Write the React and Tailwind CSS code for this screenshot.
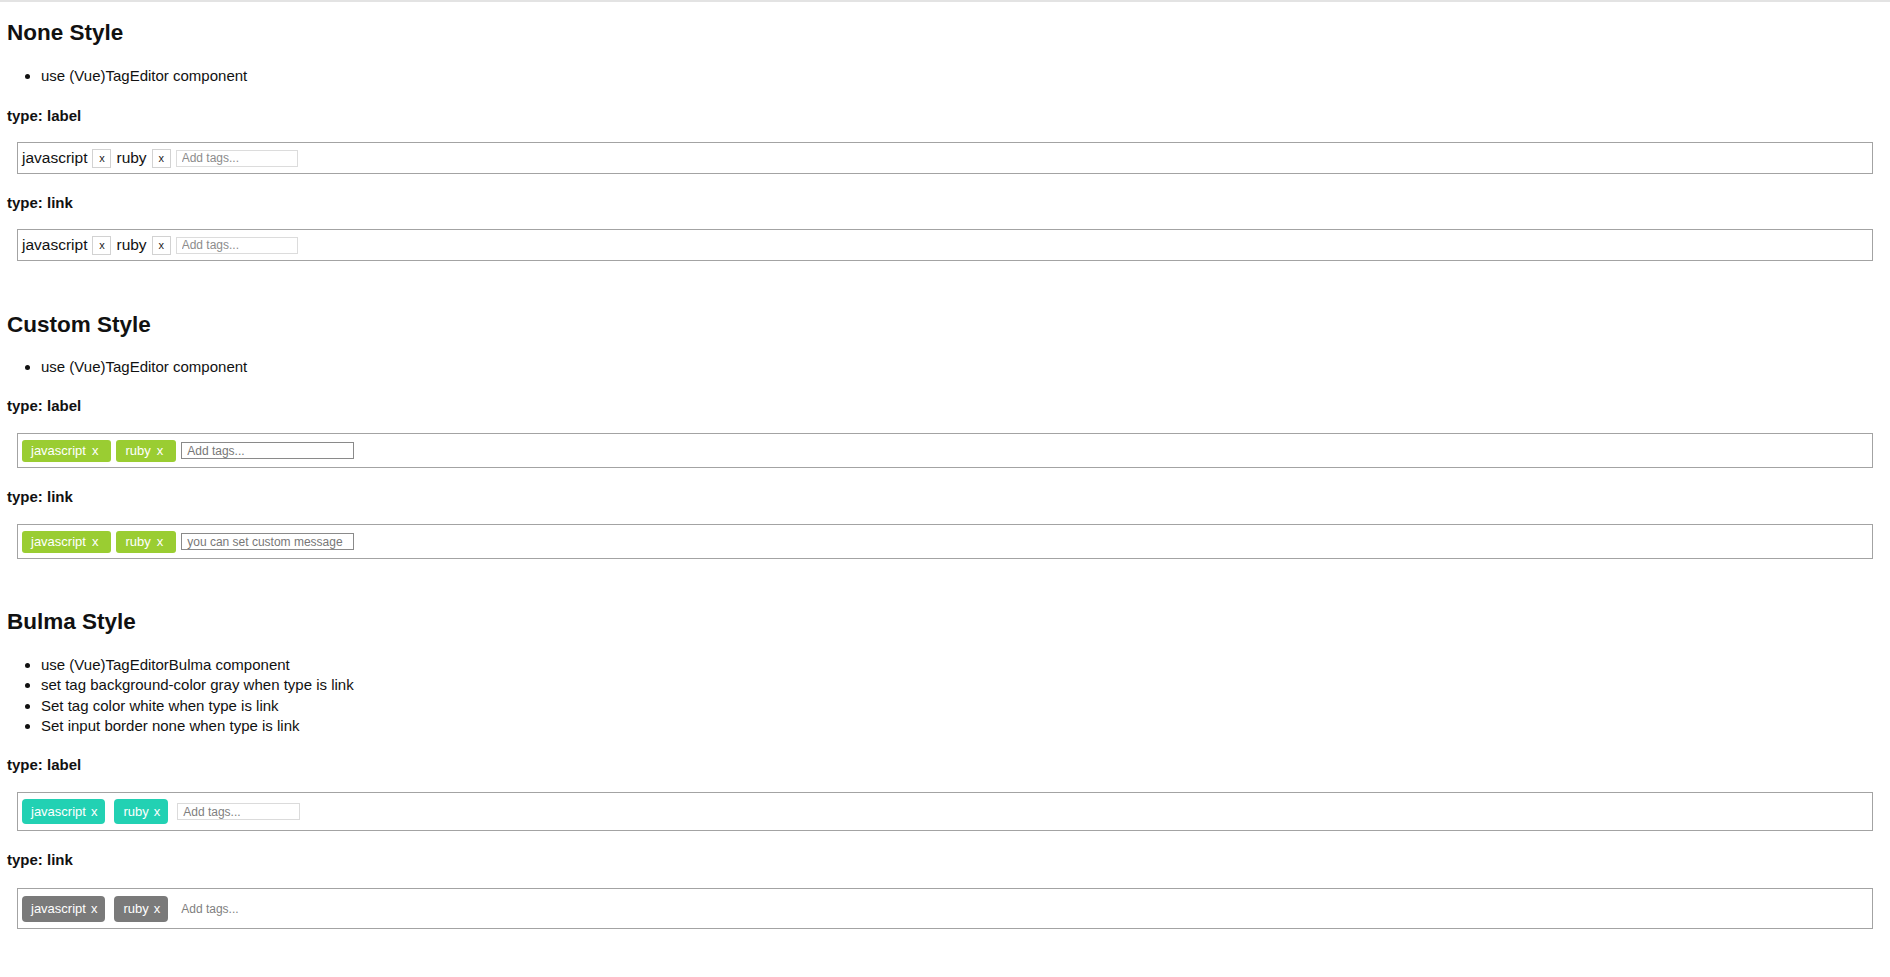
import React from 'react';

const tags = ['javascript', 'ruby'];

// plain editor: text + bordered "x" button
function NoneEditor() {
  return (
    <div className="mx-[10px] mt-[16px] h-[32px] flex items-center gap-[5px] px-[4px] border border-[#a3a3a3]">
      {tags.map((tag) => (
        <React.Fragment key={tag}>
          <span className="text-[15.5px] leading-none text-[#111]">{tag}</span>
          <span className="w-[19px] h-[19px] flex items-center justify-center border border-[#d2d2d2] text-[11px] leading-none font-medium text-[#222]">
            x
          </span>
        </React.Fragment>
      ))}
      <input
        placeholder="Add tags..."
        className="w-[122px] h-[17px] border border-[#dcdcdc] px-[5px] text-[12px] placeholder:text-[#8c8c8c] outline-none"
      />
    </div>
  );
}

function CustomEditor({ placeholder = 'Add tags...' }) {
  return (
    <div className="mx-[10px] mt-[17px] h-[35px] flex items-center gap-[5px] px-[4px] border border-[#a3a3a3]">
      {tags.map((tag) => (
        <span
          key={tag}
          className="h-[22px] flex items-center pl-[9px] pr-[13px] rounded-[3px] bg-[#9acd32] text-white text-[13px] leading-none"
        >
          {tag}
          <span className="ml-[6px]">x</span>
        </span>
      ))}
      <input
        placeholder={placeholder}
        className="w-[173px] h-[17px] border border-[#8a8a8a] px-[5px] text-[12px] placeholder:text-[#777] outline-none"
      />
    </div>
  );
}

function BulmaEditor({ link }) {
  return (
    <div
      className={`mx-[10px] flex items-center px-[4px] border border-[#a3a3a3] ${
        link ? 'mt-[18px] h-[41px]' : 'mt-[17px] h-[39px]'
      }`}
    >
      {tags.map((tag) => (
        <span
          key={tag}
          className={`mr-[9px] flex items-center pl-[9px] pr-[8px] rounded-[4px] text-white text-[13px] leading-none ${
            link ? 'h-[26px] bg-[#7a7a7a]' : 'h-[25px] bg-[#22d1b3]'
          }`}
        >
          {tag}
          <span className="ml-[5px]">x</span>
        </span>
      ))}
      <input
        placeholder="Add tags..."
        className={`w-[123px] h-[17px] text-[12px] placeholder:text-[#7f7f7f] outline-none ${
          link ? 'px-[4px]' : 'border border-[#dbdbdb] px-[5px]'
        }`}
      />
    </div>
  );
}

function Heading({ children, className }) {
  return <h2 className={`text-[22.5px] leading-[26px] font-bold ${className}`}>{children}</h2>;
}

function TypeLabel({ children }) {
  return <h3 className="mt-[19px] text-[15px] leading-[20px] font-bold">{children}</h3>;
}

export default function App() {
  return (
    <div className="min-h-screen bg-white border-t-2 border-[#e3e3e3] px-[7px] pb-[40px] text-[#111] font-['Liberation_Sans',Arial,sans-serif]">
      {/* None Style */}
      <Heading className="mt-[18px]">None Style</Heading>
      <ul className="mt-[20px] pl-[34px] list-disc text-[15px] leading-[20px]">
        <li>use (Vue)TagEditor component</li>
      </ul>
      <h3 className="mt-[20px] text-[15px] leading-[20px] font-bold">type: label</h3>
      <NoneEditor />
      <TypeLabel>type: link</TypeLabel>
      <NoneEditor />

      {/* Custom Style */}
      <Heading className="mt-[51px]">Custom Style</Heading>
      <ul className="mt-[19px] pl-[34px] list-disc text-[15px] leading-[20px]">
        <li>use (Vue)TagEditor component</li>
      </ul>
      <TypeLabel>type: label</TypeLabel>
      <CustomEditor />
      <TypeLabel>type: link</TypeLabel>
      <CustomEditor placeholder="you can set custom message" />

      {/* Bulma Style */}
      <Heading className="mt-[50px]">Bulma Style</Heading>
      <ul className="mt-[20px] pl-[34px] list-disc text-[15px] leading-[20.3px]">
        <li>use (Vue)TagEditorBulma component</li>
        <li>set tag background-color gray when type is link</li>
        <li>Set tag color white when type is link</li>
        <li>Set input border none when type is link</li>
      </ul>
      <TypeLabel>type: label</TypeLabel>
      <BulmaEditor />
      <TypeLabel>type: link</TypeLabel>
      <BulmaEditor link />
    </div>
  );
}
